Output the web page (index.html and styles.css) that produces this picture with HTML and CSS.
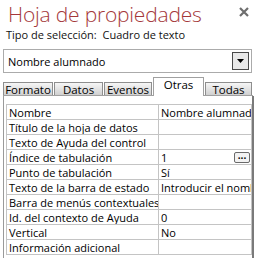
FILE: index.html
```html
<!DOCTYPE html>
<html>
  <head>
    <title>Hoja de propiedades</title>
    <link rel="stylesheet" href="styles.css">
  </head>
  <body>
    <div class="sheet">
      <div class="head">
        <h1 class="title">Hoja de propiedades</h1>
        <svg class="close" width="10" height="10" viewBox="0 0 10 10"><path d="M1 1 L9 9 M9 1 L1 9" stroke="#6e6e6e" stroke-width="2.2"/></svg>
      </div>
      <div class="seltype">Tipo de selección:&nbsp; Cuadro de texto</div>

      <div class="combo">
        <span class="combotext">Nombre alumnado</span>
        <span class="drop"><svg width="7" height="4" viewBox="0 0 7 4"><path d="M0 0 H7 L3.5 4 Z" fill="#000"/></svg></span>
      </div>

      <ul class="tabs">
        <li class="tab">Formato</li>
        <li class="tab">Datos</li>
        <li class="tab">Eventos</li>
        <li class="tab active">Otras</li>
        <li class="tab">Todas</li>
      </ul>

      <div class="panel">
        <div class="props">
          <div class="row"><span class="pname">Nombre</span><span class="pval">Nombre alumnado</span></div>
          <div class="row"><span class="pname">Título de la hoja de datos</span><span class="pval"></span></div>
          <div class="row"><span class="pname">Texto de Ayuda del control</span><span class="pval"></span></div>
          <div class="row"><span class="pname">Índice de tabulación</span><span class="pval valbox"><span>1</span><span class="dots">...</span></span></div>
          <div class="row"><span class="pname">Punto de tabulación</span><span class="pval">Sí</span></div>
          <div class="row"><span class="pname">Texto de la barra de estado</span><span class="pval">Introducir el nombre</span></div>
          <div class="row"><span class="pname">Barra de menús contextuales</span><span class="pval"></span></div>
          <div class="row"><span class="pname">Id. del contexto de Ayuda</span><span class="pval">0</span></div>
          <div class="row"><span class="pname">Vertical</span><span class="pval">No</span></div>
          <div class="row"><span class="pname">Información adicional</span><span class="pval"></span></div>
        </div>
      </div>
    </div>
  </body>
</html>
```

FILE: styles.css
```css
html, body { margin: 0; padding: 0; background: #fff; }
body { font-family: "Open Sans", "Noto Sans", sans-serif; font-size: 11px; color: #000; }
.sheet { width: 255px; height: 258px; overflow: hidden; display: flex; flex-direction: column; }

.head { display: flex; justify-content: space-between; align-items: flex-start; height: 28px; }
.title { margin: 0; padding: 1px 0 0 8px; font-weight: 300; font-size: 21px; line-height: 26px; color: #a4373a; letter-spacing: -0.2px; }
.close { margin: 7px 6px 0 0; }

.seltype { padding-left: 6px; height: 21px; line-height: 14px; color: #111; }

.combo { margin: 0 3px; height: 22px; border: 1px solid #ababab; display: flex; align-items: center; justify-content: space-between; }
.combotext { padding-left: 4px; }
.drop { width: 15px; height: 16px; margin-right: 2px; border: 1px solid #4a4a4a; background: #e9e9e9; display: flex; align-items: center; justify-content: center; }

.tabs { list-style: none; margin: 4px 0 0 3px; padding: 0; display: flex; align-items: flex-end; height: 18px; width: 250px; border-bottom: 1px solid #a0a0a0; }
.tab { height: 12px; line-height: 13px; font-size: 11.5px; border: 1px solid #8e8e8e; border-bottom: none; background: linear-gradient(#f6f6f6, #d0d0d0); text-align: center; margin-right: 1px; }
.tab:nth-child(1) { width: 48px; }
.tab:nth-child(2) { width: 47px; }
.tab:nth-child(3) { width: 46px; }
.tab:nth-child(5) { width: 45px; margin-right: 0; }
.tab.active { width: 49px; height: 18px; line-height: 13px; background: #fff; border-color: #a0a0a0; margin-bottom: -1px; }

.panel { flex: 1; margin-left: 3px; width: 251px; border-left: 1px solid #9a9a9a; border-right: 2px solid #7a7a7a; padding: 8px 0 0 2px; box-sizing: border-box; }
.props { width: 246px; border-top: 1px solid #c4c4c4; border-left: 1px solid #c4c4c4; box-sizing: border-box; }
.row { display: flex; height: 15px; }
.row span.pname, .row span.pval { height: 14px; line-height: 15px; padding-left: 2px; white-space: nowrap; overflow: hidden; border-right: 1px solid #c4c4c4; border-bottom: 1px solid #c4c4c4; }
.pname { width: 149px; flex: none; }
.pval { flex: 1; }
.valbox { display: flex; justify-content: space-between; align-items: center; }
.dots { width: 14px; height: 9px; line-height: 4px; font-size: 10px; font-weight: bold; text-align: center; border: 1px solid #6a6a6a; border-radius: 2px; background: #f2f2f2; margin-right: 1px; }
```
